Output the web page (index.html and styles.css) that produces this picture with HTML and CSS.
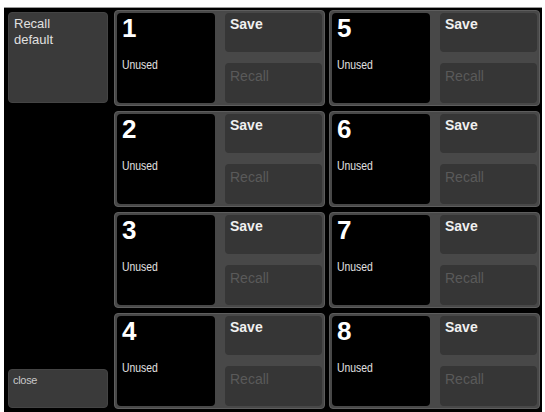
FILE: index.html
```html
<!DOCTYPE html>
<html>
<head>
<meta charset="utf-8">
<link rel="stylesheet" href="styles.css">
</head>
<body>
<div class="panel">
  <div class="side">
    <div class="side-btn recall-default">Recall<br>default</div>
    <div class="side-btn close-btn">close</div>
  </div>
  <div class="slots">
    <div class="slot"><div class="num"><div class="digit">1</div><div class="label">Unused</div></div><div class="actions"><div class="btn save">Save</div><div class="btn recall">Recall</div></div></div>
    <div class="slot"><div class="num"><div class="digit">5</div><div class="label">Unused</div></div><div class="actions"><div class="btn save">Save</div><div class="btn recall">Recall</div></div></div>
    <div class="slot"><div class="num"><div class="digit">2</div><div class="label">Unused</div></div><div class="actions"><div class="btn save">Save</div><div class="btn recall">Recall</div></div></div>
    <div class="slot"><div class="num"><div class="digit">6</div><div class="label">Unused</div></div><div class="actions"><div class="btn save">Save</div><div class="btn recall">Recall</div></div></div>
    <div class="slot"><div class="num"><div class="digit">3</div><div class="label">Unused</div></div><div class="actions"><div class="btn save">Save</div><div class="btn recall">Recall</div></div></div>
    <div class="slot"><div class="num"><div class="digit">7</div><div class="label">Unused</div></div><div class="actions"><div class="btn save">Save</div><div class="btn recall">Recall</div></div></div>
    <div class="slot"><div class="num"><div class="digit">4</div><div class="label">Unused</div></div><div class="actions"><div class="btn save">Save</div><div class="btn recall">Recall</div></div></div>
    <div class="slot"><div class="num"><div class="digit">8</div><div class="label">Unused</div></div><div class="actions"><div class="btn save">Save</div><div class="btn recall">Recall</div></div></div>
  </div>
</div>
</body>
</html>
```

FILE: styles.css
```css
html, body {
  margin: 0;
  padding: 0;
  background: #fff;
  font-family: "Liberation Sans", Arial, sans-serif;
}
.panel {
  box-sizing: border-box;
  margin: 7px 0 0 4px;
  width: 538px;
  height: 405px;
  background: #000;
  border-top: 1px solid #9a9a9a;
  display: flex;
}
.side {
  box-sizing: border-box;
  width: 108px;
  padding: 4px 4px 4px 4px;
  display: flex;
  flex-direction: column;
  justify-content: space-between;
}
.side-btn {
  box-sizing: border-box;
  background: #3a3a3a;
  border: 1px solid #444;
  border-radius: 4px;
  color: #e0e0e0;
}
.recall-default {
  height: 91px;
  padding: 3px 5px;
  font-size: 13px;
  line-height: 16px;
}
.close-btn {
  height: 39px;
  padding: 4px 4px;
  font-size: 11px;
  line-height: 13px;
  color: #c8c8c8;
  letter-spacing: -0.3px;
}
.slots {
  box-sizing: border-box;
  flex: 1;
  padding: 2px 2px 3px 2px;
  display: grid;
  grid-template-columns: 211px 211px;
  grid-template-rows: repeat(4, 96px);
  column-gap: 4px;
  row-gap: 5px;
}
.slot {
  box-sizing: border-box;
  background: #484848;
  border: 1px solid #5e5e5e;
  border-radius: 4px;
  padding: 2px;
  display: flex;
  gap: 10px;
}
.num {
  width: 98px;
  background: #000;
  border-radius: 4px;
  padding: 0 5px;
  box-sizing: border-box;
  color: #fff;
}
.digit {
  font-size: 26px;
  font-weight: bold;
  line-height: 30px;
}
.label {
  margin-top: 14px;
  font-size: 13px;
  line-height: 15px;
  color: #e0e0e0;
  display: inline-block;
  transform: scaleX(0.8);
  transform-origin: left center;
}
.actions {
  flex: 1;
  display: grid;
  grid-template-rows: 39px 40px;
  row-gap: 11px;
}
.btn {
  box-sizing: border-box;
  background: #363636;
  border-radius: 4px;
  padding: 3px 5px;
  font-size: 14px;
  line-height: 16px;
}
.save {
  color: #f0f0f0;
  font-weight: bold;
}
.recall {
  color: #5a5a5a;
  padding-top: 5px;
}
```
